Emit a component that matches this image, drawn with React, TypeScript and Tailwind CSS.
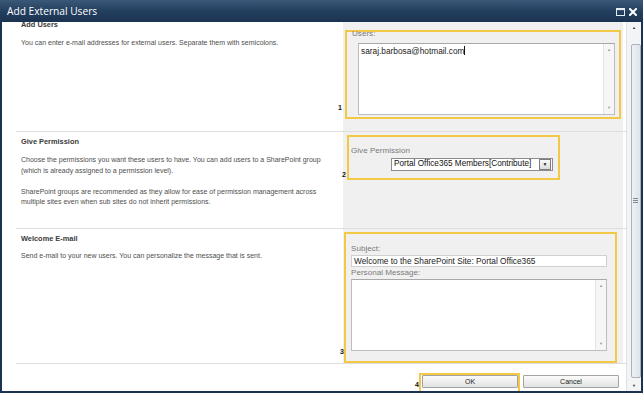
import React from 'react';

const ARROW_UP = '\u25B2';
const ARROW_DOWN = '\u25BC';

// tiny disabled scroll strip drawn inside the text areas
const InnerScroll: React.FC = () => (
    <div className="w-[11px] h-full bg-[#f6f6f6] border-l border-[#e4e4e4] flex flex-col items-center justify-between py-[4px] text-[4px] leading-none text-[#9a9a9a]">
        <span>{ARROW_UP}</span>
        <span>{ARROW_DOWN}</span>
    </div>
);

const Badge: React.FC<{ n: string; className: string }> = ({ n, className }) => (
    <span className={`absolute text-[7px] font-bold leading-none text-[#111] ${className}`}>{n}</span>
);

const Label: React.FC<{ children: React.ReactNode; className?: string }> = ({ children, className }) => (
    <div className={`text-[8.1px] leading-[8px] text-[#7a7a7a] ${className ?? ''}`}>{children}</div>
);

const App: React.FC = () => {
    return (
        <div className="w-[643px] h-[393px] bg-[#1b3350] flex flex-col overflow-hidden font-['Liberation_Sans',Arial,sans-serif]">
            {/* Title bar */}
            <div className="h-[22px] shrink-0 flex items-center justify-between bg-gradient-to-b from-[#3a5878] via-[#24405f] to-[#1a3350] pl-[7px] pr-[6px]">
                <span className="font-['Open_Sans',sans-serif] text-[10.2px] text-white leading-none mt-[1px]">Add External Users</span>
                <div className="flex items-center gap-[4px] mt-[1px]">
                    <svg width="9" height="8" viewBox="0 0 9 8">
                        <rect x="0.5" y="0.5" width="8" height="7" fill="none" stroke="#e6ecf2" strokeWidth="1" />
                        <rect x="0.5" y="0.5" width="8" height="1.6" fill="#e6ecf2" />
                    </svg>
                    <svg width="8" height="8" viewBox="0 0 8 8">
                        <path d="M1 1 L7 7 M7 1 L1 7" stroke="#ffffff" strokeWidth="2" strokeLinecap="square" />
                    </svg>
                </div>
            </div>

            {/* Body */}
            <div className="flex-1 min-h-0 flex mx-[2px] mb-[2px] bg-white">
                <div className="w-[624px] flex flex-col">
                    {/* Add Users */}
                    <div className="h-[109px] flex ml-[14px]">
                        <div className="w-[327px] pl-[5px]">
                            <div className="text-[7.4px] font-bold text-[#3a3a3a] leading-[8px] mt-[-1px]">Add Users</div>
                            <div className="text-[7px] text-[#4e4e4e] leading-[10px] mt-[9px]">You can enter e-mail addresses for external users. Separate them with semicolons.</div>
                        </div>
                        <div className="w-[280px] bg-[#f0f0f0]">
                            <div className="relative ml-[2px] mt-[8px] w-[276px] h-[89px] border-2 border-[#f3c845]">
                                <Label className="pl-[5px] -mt-[2px]">Users:</Label>
                                <div className="ml-[11px] mt-[5px] w-[257px] h-[72px] bg-white border border-[#bdbdbd] border-t-[#a8a8a8] flex">
                                    <div className="flex-1 pl-[2px] pt-[2px] text-[8.3px] leading-[10px] text-[#222]">
                                        saraj.barbosa@hotmail.com<span className="inline-block w-px h-[9px] bg-[#111] align-[-1px]" />
                                    </div>
                                    <InnerScroll />
                                </div>
                                <Badge n="1" className="-left-[9px] bottom-[6px]" />
                            </div>
                        </div>
                    </div>

                    {/* Give Permission */}
                    <div className="h-[97px] flex ml-[14px] border-t border-[#dedede]">
                        <div className="w-[327px] pl-[5px] pt-[6px]">
                            <div className="text-[7.4px] font-bold text-[#3a3a3a] leading-[8px]">Give Permission</div>
                            <div className="w-[312px] text-[7px] text-[#4e4e4e] leading-[10.8px] mt-[9px]">
                                Choose the permissions you want these users to have. You can add users to a SharePoint group (which is already assigned to a permission level).
                            </div>
                            <div className="w-[312px] text-[7px] text-[#4e4e4e] leading-[10.8px] mt-[10px]">
                                SharePoint groups are recommended as they allow for ease of permission management across multiple sites even when sub sites do not inherit permissions.
                            </div>
                        </div>
                        <div className="w-[280px] bg-[#f0f0f0]">
                            <div className="relative ml-[4px] mt-[3px] w-[213px] h-[45px] border-2 border-[#f3c845]">
                                <Label className="pl-[2px] mt-[10px]">Give Permission</Label>
                                <div className="ml-[42px] mt-[3px] w-[162px] h-[13px] bg-white border border-[#8c8c8c] flex items-center">
                                    <span className="flex-1 pl-[2px] text-[8.2px] leading-none text-[#111] whitespace-nowrap">Portal Office365 Members[Contribute]</span>
                                    <span className="w-[12px] h-[11px] mr-[1px] border border-[#7d7d7d] bg-gradient-to-b from-[#fafafa] to-[#dcdcdc] flex items-center justify-center text-[5px] leading-none text-[#222]">{ARROW_DOWN}</span>
                                </div>
                                <Badge n="2" className="-left-[7px] bottom-[0px]" />
                            </div>
                        </div>
                    </div>

                    {/* Welcome E-mail */}
                    <div className="h-[135px] flex ml-[14px] border-t border-[#dedede]">
                        <div className="w-[327px] pl-[5px] pt-[6px]">
                            <div className="text-[7.4px] font-bold text-[#3a3a3a] leading-[8px]">Welcome E-mail</div>
                            <div className="text-[7px] text-[#4e4e4e] leading-[10px] mt-[8px]">Send e-mail to your new users. You can personalize the message that is sent.</div>
                        </div>
                        <div className="w-[280px] bg-[#f0f0f0]">
                            <div className="relative ml-[1px] mt-[3px] w-[273px] h-[131px] border-2 border-[#f3c845]">
                                <Label className="pl-[5px] mt-[11px]">Subject:</Label>
                                <div className="ml-[5px] mt-[2px] w-[256px] h-[12px] bg-white border border-[#d0d0d0] flex items-center pl-[2px] text-[8.3px] leading-none text-[#222] whitespace-nowrap">
                                    Welcome to the SharePoint Site: Portal Office365
                                </div>
                                <Label className="pl-[5px] mt-[2px]">Personal Message:</Label>
                                <div className="ml-[5px] mt-[2px] w-[256px] h-[72px] bg-white border border-[#bdbdbd] border-t-[#a8a8a8] flex">
                                    <div className="flex-1" />
                                    <InnerScroll />
                                </div>
                                <Badge n="3" className="-left-[6px] bottom-[6px]" />
                            </div>
                        </div>
                    </div>

                    {/* Buttons */}
                    <div className="flex-1 min-h-0 overflow-hidden flex justify-end items-start ml-[14px] pr-[7px] border-t border-[#dedede]">
                        <div className="relative mt-[9px] h-[20px] w-[101px] border-2 border-[#f3c845] flex items-start pl-[1px]">
                            <button className="w-[96px] h-[13px] border border-[#a3a3a3] rounded-[1px] bg-gradient-to-b from-[#fbfbfb] to-[#e2e2e2] text-[7px] leading-none text-[#222]">OK</button>
                            <Badge n="4" className="-left-[6px] bottom-[3px]" />
                        </div>
                        <button className="ml-[3px] mt-[11px] w-[96px] h-[13px] border border-[#a3a3a3] rounded-[1px] bg-gradient-to-b from-[#fbfbfb] to-[#e2e2e2] text-[7px] leading-none text-[#222]">Cancel</button>
                    </div>
                </div>

                {/* Page scrollbar */}
                <div className="w-[15px] bg-[#f2f4f6] border-l border-[#dfe3e8] flex flex-col items-center text-[4px] leading-none text-[#333]">
                    <span className="mt-[4px]">{ARROW_UP}</span>
                    <div className="mt-[14px] ml-[3px] w-[10px] h-[334px] border border-[#a9b3be] rounded-[2px] bg-gradient-to-r from-[#eef1f4] to-[#dfe4ea] flex flex-col items-center pt-[153px]">
                        <svg width="5" height="5" viewBox="0 0 5 5">
                            <path d="M0 0.5 H5 M0 2.5 H5 M0 4.5 H5" stroke="#7f8a96" strokeWidth="1" />
                        </svg>
                    </div>
                    <span className="mt-auto mb-[3px]">{ARROW_DOWN}</span>
                </div>
            </div>
        </div>
    );
};

export default App;
